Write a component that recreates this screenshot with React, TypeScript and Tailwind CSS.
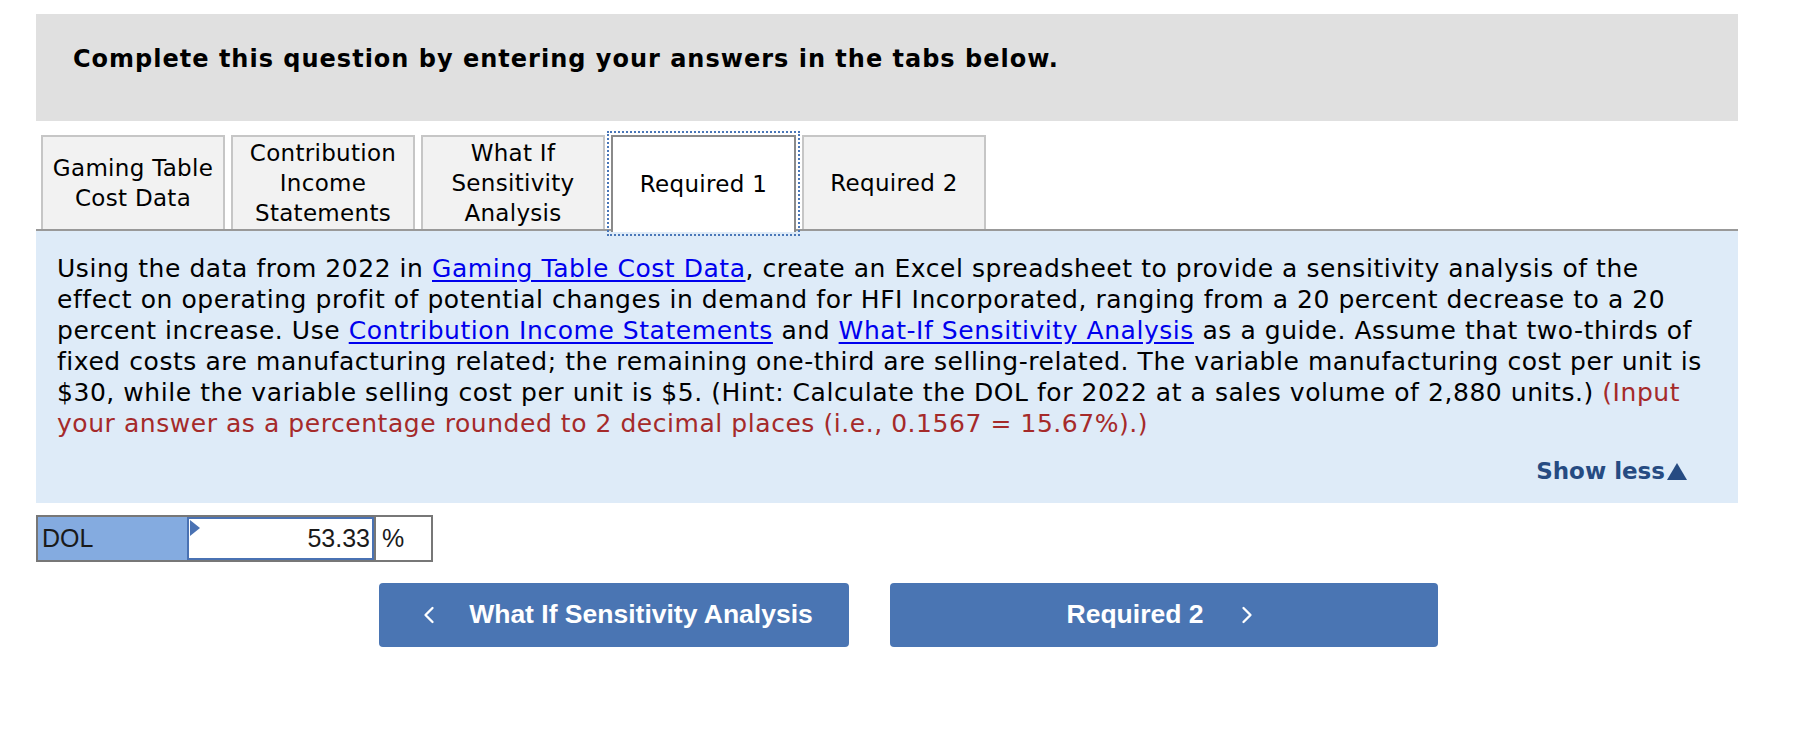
import { ChevronLeft, ChevronRight } from 'lucide-react';

const verdana = { fontFamily: '"DejaVu Sans", Verdana, sans-serif' };
const arial = { fontFamily: '"Liberation Sans", Arial, sans-serif' };

const tabs = [
  { id: 'gaming', lines: ['Gaming Table', 'Cost Data'] },
  { id: 'contribution', lines: ['Contribution', 'Income', 'Statements'] },
  { id: 'whatif', lines: ['What If', 'Sensitivity', 'Analysis'] },
  { id: 'req1', lines: ['Required 1'], active: true },
  { id: 'req2', lines: ['Required 2'] },
];

function Tab({ lines, active }: { lines: string[]; active?: boolean }) {
  if (active) {
    return (
      <div className="relative z-10 -mb-[3px] h-[97px] w-[185px] border-2 border-b-0 border-[#8a8a8a] bg-white outline-2 outline-offset-2 outline-dotted outline-[#4a77b8]">
        <div className="flex h-[94px] items-center justify-center text-center text-[23px] leading-[30px] tracking-[0.3px] text-black">
          {lines.join(' ')}
        </div>
      </div>
    );
  }
  return (
    <div className="flex h-[94px] w-[184px] items-center justify-center border-2 border-b-0 border-[#c6c6c6] bg-[#f2f2f2] text-center text-[23px] leading-[30px] tracking-[0.3px] text-black">
      <div>
        {lines.map((l) => (
          <div key={l}>{l}</div>
        ))}
      </div>
    </div>
  );
}

function Link({ children }: { children: React.ReactNode }) {
  return <span className="text-[#0000ee] underline underline-offset-[3px]">{children}</span>;
}

export default function App() {
  return (
    <div className="min-h-[740px] bg-white pl-[36px] pt-[14px]" style={verdana}>
      <div className="w-[1702px]">
        <div className="h-[107px] bg-[#e0e0e0] pl-[37px] pt-[31px]">
          <h1 className="text-[24px] font-bold leading-[28px] tracking-[1px] text-black">
            Complete this question by entering your answers in the tabs below.
          </h1>
        </div>

        <div className="mt-[14px] flex items-end gap-[6px] pl-[5px]">
          {tabs.map((t) => (
            <Tab key={t.id} lines={t.lines} active={t.active} />
          ))}
        </div>

        <div className="border-t-2 border-[#999999] bg-[#deebf8] pb-[18px] pl-[21px] pr-[51px] pt-[22px]">
          <p className="whitespace-nowrap text-[25px] leading-[31px] tracking-[0.55px] text-black">
            Using the data from 2022 in <Link>Gaming Table Cost Data</Link>, create an Excel spreadsheet to provide a sensitivity analysis of the
            <br />
            effect on operating profit of potential changes in demand for HFI Incorporated, ranging from a 20 percent decrease to a 20
            <br />
            percent increase. Use <Link>Contribution Income Statements</Link> and <Link>What-If Sensitivity Analysis</Link> as a guide. Assume that two-thirds of
            <br />
            fixed costs are manufacturing related; the remaining one-third are selling-related. The variable manufacturing cost per unit is
            <br />
            $30, while the variable selling cost per unit is $5. (Hint: Calculate the DOL for 2022 at a sales volume of 2,880 units.){' '}
            <span className="text-[#a52a2a]">(Input</span>
            <br />
            <span className="text-[#a52a2a]">your answer as a percentage rounded to 2 decimal places (i.e., 0.1567 = 15.67%).)</span>
          </p>
          <div className="mt-[19px] flex justify-end">
            <span className="flex items-center text-[23px] font-bold leading-[27px] text-[#264b82]">
              Show less
              <svg className="ml-[2px]" width="20" height="17" viewBox="0 0 20 17">
                <path d="M10 0 L20 17 L0 17 Z" fill="#264b82" />
              </svg>
            </span>
          </div>
        </div>

        <div className="mt-[12px] flex h-[47px] w-[397px] border-2 border-[#777777] text-[25px] text-[#1a1a1a]" style={arial}>
          <div className="flex w-[149px] items-center bg-[#84abe0] pl-[4px]">DOL</div>
          <div className="relative flex w-[187px] items-center justify-end border-2 border-[#4a72b3] bg-white pr-[2px]">
            <svg className="absolute left-[1px] top-[1px]" width="10" height="16" viewBox="0 0 10 16">
              <path d="M0 0 L10 8 L0 16 Z" fill="#4a72b3" />
            </svg>
            53.33
          </div>
          <div className="flex flex-1 items-center border-l-2 border-[#777777] bg-white pl-[6px]">%</div>
        </div>

        <div className="mt-[21px] flex gap-[41px] pl-[343px]" style={arial}>
          <button className="flex h-[64px] w-[470px] items-center justify-center gap-[26px] rounded-[4px] bg-[#4a75b3] text-[26.5px] font-bold text-white">
            <ChevronLeft size={28} strokeWidth={2} />
            What If Sensitivity Analysis
          </button>
          <button className="flex h-[64px] w-[548px] items-center justify-center gap-[30px] rounded-[4px] bg-[#4a75b3] text-[26.5px] font-bold text-white">
            Required 2
            <ChevronRight size={28} strokeWidth={2} />
          </button>
        </div>
      </div>
    </div>
  );
}
